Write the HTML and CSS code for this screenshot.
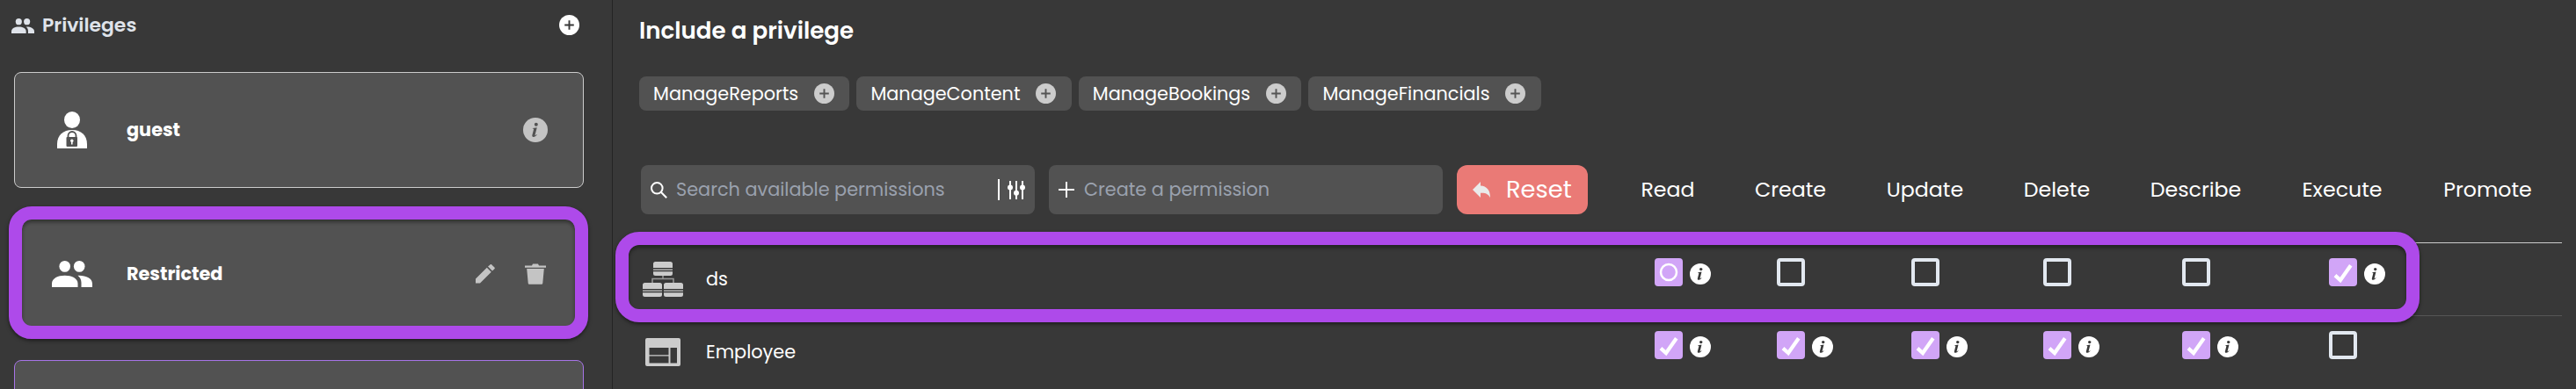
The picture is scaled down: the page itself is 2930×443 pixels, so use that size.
FILE: index.html
```html
<!DOCTYPE html>
<html lang="en">
<head>
<meta charset="utf-8">
<title>Privileges</title>
<link rel="stylesheet" href="styles.css">
</head>
<body>
<svg width="0" height="0" class="defs" aria-hidden="true">
  <symbol id="people" viewBox="0 0 46 30">
    <ellipse cx="14.7" cy="6.4" rx="6.3" ry="6.4"/><ellipse cx="31.2" cy="6.4" rx="6.3" ry="6.4"/>
    <path d="M0 30v-4c0-6 7-9.200 14.700-9.200s14.800 3.200 14.800 9.200v4z"/>
    <path d="M29.500 16.800C39 16.500 46 20 46 26v4H33.500v-5c0-3.500-1.500-6.200-4-8.200z"/>
  </symbol>
  <symbol id="plus-circle" viewBox="0 0 24 24"><circle cx="12" cy="12" r="12"/><path class="glyph" d="M12 6.500v11M6.500 12h11"/></symbol>
  <symbol id="info" viewBox="0 0 24 24"><circle cx="12" cy="12" r="12"/><circle class="ink" cx="12.700" cy="6.600" r="1.700"/><path class="ink" d="M9.300 10.300l4.200-.7-1.900 7.300c-.1.500.2.500.6.200l1-.9.400.4c-1.300 1.600-2.500 2.300-3.500 2.200-1.100 0-1.500-.8-1.200-1.900l1.400-5.400c.1-.5-.1-.7-1.100-.7z"/></symbol>
  <symbol id="check" viewBox="0 0 32 32"><path class="tick" d="M7 19.600l6 5.400L24.800 8.200"/></symbol>
</svg>
<div class="app">
  <aside class="sidebar">
    <header class="side-head">
      <svg class="ic-people-sm"><use href="#people"/></svg>
      <h2 class="side-title">Privileges</h2>
      <svg class="ic-add"><use href="#plus-circle"/></svg>
    </header>
    <div class="card">
      <svg class="ic-guest" viewBox="0 0 34 42"><ellipse cx="17" cy="9.500" rx="9" ry="9.500"/><path d="M0 42V37C0 27 7 21 17 21s17 6 17 16v5z"/><path class="shackle" d="M12.500 31v-3.500a4.500 4.500 0 0 1 9 0V31"/><rect class="dark" x="10.500" y="29" width="12.500" height="11" rx="1"/><circle cx="16.800" cy="33.200" r="1.700"/><path d="M16 34h1.600v3.500H16z"/></svg>
      <span class="card-name">guest</span>
      <svg class="ic-info-lg"><use href="#info"/></svg>
    </div>
    <div class="card">
      <svg class="ic-people"><use href="#people"/></svg>
      <span class="card-name">Restricted</span>
      <svg class="ic-pencil" viewBox="0 0 22 22"><path d="M0 21.500v-5L12.800 3.800l5 4.900L5 21.500zM14 2.600L16.500.4c.6-.5 1.200-.5 1.800 0l3.100 3c.6.6.6 1.200 0 1.800L19 7.500z"/></svg>
      <svg class="ic-trash" viewBox="0 0 24 24"><path d="M0 2.500h8L9 .5h6l1 2h8v2.300H0zM2.200 6h19.600l-1.500 16.300c-.1 1-.7 1.500-1.700 1.500H5.400c-1 0-1.600-.5-1.700-1.500z"/></svg>
      <div class="highlight highlight-card"></div>
    </div>
    <div class="card card-violet"></div>
  </aside>
  <main class="main">
    <h1 class="title">Include a privilege</h1>
    <div class="chips">
      <span class="chip">ManageReports<svg><use href="#plus-circle"/></svg></span>
      <span class="chip">ManageContent<svg><use href="#plus-circle"/></svg></span>
      <span class="chip">ManageBookings<svg><use href="#plus-circle"/></svg></span>
      <span class="chip">ManageFinancials<svg><use href="#plus-circle"/></svg></span>
    </div>
    <div class="toolbar">
      <div class="field">
        <svg class="ic-search" viewBox="0 0 19 19"><circle cx="7.300" cy="7.300" r="6.300"/><path d="M11.800 11.800l6.400 6.400"/></svg>
        <span class="hint">Search available permissions</span>
        <span class="bar"></span>
        <svg class="ic-sliders" viewBox="0 0 20 21"><path d="M3 0v21M10 0v21M17 0v21"/><circle cx="3" cy="7.500" r="2"/><circle cx="10" cy="13.800" r="2"/><circle cx="17" cy="7.500" r="2"/></svg>
      </div>
      <div class="field">
        <svg class="ic-plus" viewBox="0 0 18 18"><path d="M9 0v18M0 9h18"/></svg>
        <span class="hint hint-create">Create a permission</span>
      </div>
      <button class="reset"><svg viewBox="0 0 20 18"><path d="M0 9L9 0v4.500c7 .3 11 5 11 13.500-2.500-4.500-5.500-5.600-11-5.300V18z"/></svg>Reset</button>
      <div class="cols heads">
        <span>Read</span><span>Create</span><span>Update</span><span>Delete</span><span>Describe</span><span>Execute</span><span>Promote</span>
      </div>
    </div>
    <div class="row row-first">
      <svg class="ic-ds" viewBox="0 0 46 40">
        <g id="db"><path d="M12 2.500Q12 0 14.500 0h17Q34 0 34 2.500V7H12zM12 8.500h22v1.300H12zM12 11.300h22v2.200Q34 16 31.500 16h-17Q12 16 12 13.500z"/></g>
        <use href="#db" x="-12" y="24"/><use href="#db" x="12" y="24"/>
        <path class="wire" d="M23 16v3.500M11 24v-4.500h24V24"/>
      </svg>
      <span class="name">ds</span>
      <div class="cols cells">
        <span class="cell"><i class="box on"><svg viewBox="0 0 32 32"><circle class="ring" cx="16" cy="16" r="9"/></svg></i><svg class="ic-info"><use href="#info"/></svg></span>
        <span class="cell"><i class="box"></i></span>
        <span class="cell"><i class="box"></i></span>
        <span class="cell"><i class="box"></i></span>
        <span class="cell"><i class="box"></i></span>
        <span class="cell"><i class="box on"><svg><use href="#check"/></svg></i><svg class="ic-info"><use href="#info"/></svg></span>
        <span class="cell"></span>
      </div>
      <div class="highlight highlight-row"></div>
    </div>
    <div class="row">
      <svg class="ic-table" viewBox="0 0 40 32"><path fill-rule="evenodd" d="M2 0h36q2 0 2 2v28q0 2-2 2H2q-2 0-2-2V2Q0 0 2 0zM4.500 11v8.200h22V11zM4.500 20.500v8h22v-8zM28.500 11v17.500H36V11z"/></svg>
      <span class="name">Employee</span>
      <div class="cols cells">
        <span class="cell"><i class="box on"><svg><use href="#check"/></svg></i><svg class="ic-info"><use href="#info"/></svg></span>
        <span class="cell"><i class="box on"><svg><use href="#check"/></svg></i><svg class="ic-info"><use href="#info"/></svg></span>
        <span class="cell"><i class="box on"><svg><use href="#check"/></svg></i><svg class="ic-info"><use href="#info"/></svg></span>
        <span class="cell"><i class="box on"><svg><use href="#check"/></svg></i><svg class="ic-info"><use href="#info"/></svg></span>
        <span class="cell"><i class="box on"><svg><use href="#check"/></svg></i><svg class="ic-info"><use href="#info"/></svg></span>
        <span class="cell"><i class="box"></i></span>
        <span class="cell"></span>
      </div>
    </div>
  </main>
</div>
</body>
</html>
```
FILE: styles.css
```css
* { box-sizing: border-box; }
body { margin: 0; background: #383838; color: #fff; font-family: "Poppins", "Inter", sans-serif; overflow: hidden; }
h1, h2 { margin: 0; }
svg { display: block; flex: none; fill: currentColor; }
.defs { position: absolute; }
.app { display: flex; width: 2930px; height: 443px; overflow: hidden; }

.sidebar { width: 697px; flex: none; height: 443px; border-right: 1px solid #242424; padding-left: 16px; display: flex; flex-direction: column; gap: 32px; }
.side-head { height: 50px; flex: none; display: flex; align-items: center; margin-left: -3px; padding-top: 8px; color: #dfe3ea; }
.ic-people-sm { width: 26px; height: 17px; }
.side-title { margin-left: 9px; width: 588px; font-size: 21.9px; line-height: 30px; font-weight: 600; }
.ic-add { --glyph: #383838; width: 23px; height: 23px; margin-top: -2px; color: #fff; }
.glyph { stroke: var(--glyph, #555); stroke-width: 2; }
.ink { fill: var(--ink, #383838); }
.tick { fill: none; stroke: #fff; stroke-width: 4.200; }
.card { position: relative; width: 648px; height: 132px; flex: none; display: flex; align-items: center; border: 1px solid #ccc; border-radius: 8px; background: #525252; }
.card-violet { border-color: #a774e8; }
.ic-guest { width: 34px; height: 42px; margin: 0 45px 0 48px; }
.ic-guest .dark { fill: #525252; }
.ic-guest .shackle { fill: none; stroke: #525252; stroke-width: 1.800; }
.ic-people { width: 46px; height: 30px; margin: 0 39px 0 42px; }
.card-name { flex: 1; padding-bottom: 2px; font-size: 20.8px; font-weight: 700; }
.ic-info-lg { --ink: #525252; width: 28px; height: 28px; color: #c4c4c4; margin-right: 40px; }
.ic-pencil { width: 22px; height: 22px; color: #c4c4c4; margin-right: 34px; }
.ic-trash { width: 24px; height: 24px; color: #c4c4c4; margin-right: 42px; }
.highlight { position: absolute; z-index: 2; border: 15px solid #ae4aea; box-shadow: 0 2px 4px rgba(0, 0, 0, .5), inset 0 3px 4px rgba(0, 0, 0, .4); }
.highlight-card { left: -7.5px; top: -12px; width: 659px; height: 151px; border-radius: 26px; }

.main { width: 2233px; padding-left: 30px; display: flex; flex-direction: column; }
.title { height: 87px; padding-top: 19px; font-size: 26.1px; line-height: 32px; font-weight: 600; }
.chips { display: flex; gap: 8px; height: 39px; }
.chip { display: flex; align-items: center; gap: 17.7px; padding: 0 17.6px 0 16px; border-radius: 8px; background: #525252; font-size: 20.78px; }
.chip svg { width: 23px; height: 23px; color: #ccc; }
.toolbar { display: flex; align-items: center; height: 150px; padding: 62px 0 32px 2px; }
.field { display: flex; align-items: center; width: 448px; height: 56px; flex: none; margin-right: 16px; padding-left: 11px; border-radius: 8px; background: #525252; }
.ic-search { width: 19px; height: 19px; fill: none; stroke: #fff; stroke-width: 2; }
.hint { width: 366px; margin-left: 10px; padding-bottom: 2px; font-size: 20.8px; color: #9aa1ae; }
.hint-create { margin-left: 11px; }
.bar { width: 2px; height: 24px; background: #fff; margin-right: 9px; }
.ic-sliders { width: 20px; height: 21px; stroke: #fff; stroke-width: 2; }
.ic-plus { width: 18px; height: 18px; stroke: #fff; stroke-width: 2; }
.reset { display: flex; align-items: center; flex: none; width: 149px; height: 56px; padding: 0 0 0 18px; gap: 18px; border: 0; border-radius: 12px; background: #ea7a76; color: #fff; font: 27.3px "Poppins", "Inter", sans-serif; }
.reset svg { width: 20px; height: 18px; color: #eaeaea; }
.cols { display: grid; grid-template-columns: 129px 150px 156px 144px 172px 161px 170px; flex: none; }
.heads { margin-left: 26.5px; padding-bottom: 2px; justify-items: center; font-size: 23.7px; }
.row { position: relative; display: flex; align-items: center; width: 2187px; height: 83px; flex: none; border-top: 1px solid #555; padding-left: 2px; }
.row-first { border-top-color: #ccc; }
.row > svg { color: #ccc; }
.ic-ds { width: 46px; height: 40px; margin: 0 26px 0 2px; }
.wire { fill: none; stroke: #999; stroke-width: 1.500; }
.ic-table { width: 40px; height: 32px; margin: 0 29px 0 5px; }
.name { flex: none; width: 1030px; padding-bottom: 1px; font-size: 20.8px; }
.cells { align-items: center; padding-bottom: 16px; }
.cell { display: flex; align-items: center; gap: 8px; height: 32px; padding-left: calc(50% - 16px); }
.box { flex: none; width: 32px; height: 32px; border: 4px solid #e2e8f0; border-radius: 4px; }
.box.on { border: 0; background: #d1a5f7; }
.box svg { width: 32px; height: 32px; }
.ring { fill: none; stroke: #fff; stroke-width: 2.500; }
.ic-info { width: 24px; height: 24px; margin-top: 4px; }
.highlight-row { left: -27px; top: -13px; width: 2052px; height: 103px; border-radius: 27px; }
```
